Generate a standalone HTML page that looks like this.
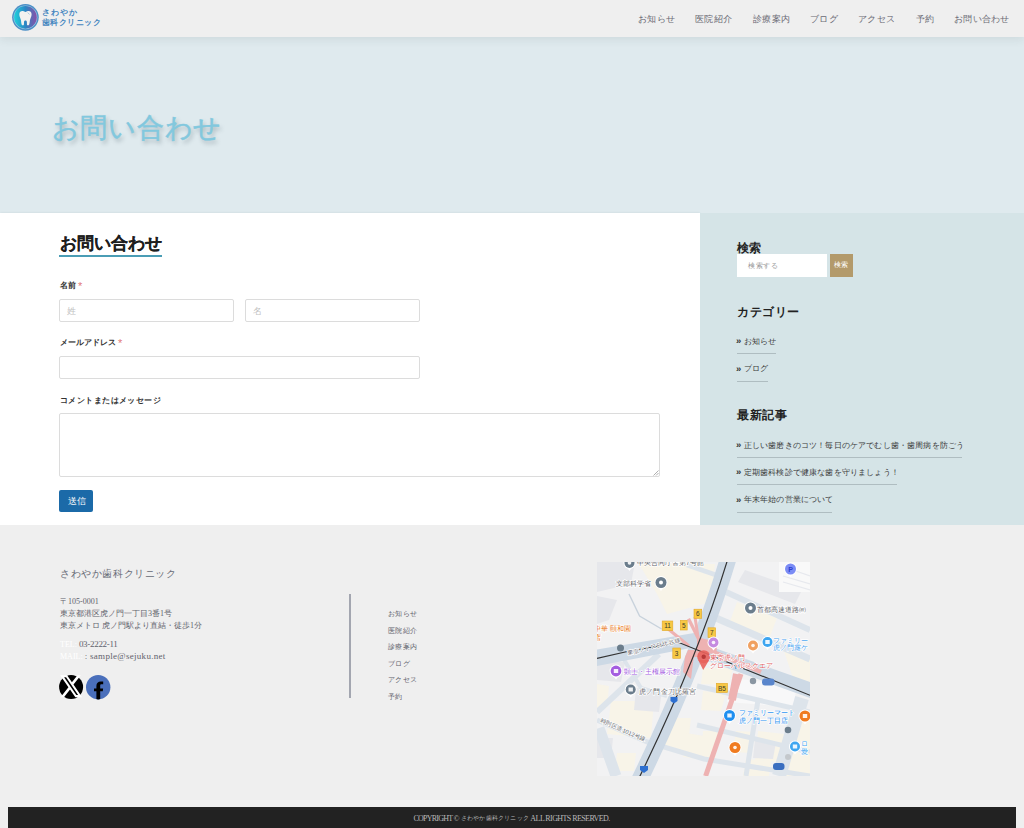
<!DOCTYPE html>
<html lang="ja">
<head>
<meta charset="utf-8">
<title>お問い合わせ</title>
<style>
*{box-sizing:border-box;margin:0;padding:0}
html,body{width:1024px;height:828px;overflow:hidden;background:#efefef}
body{position:relative;font-family:"Liberation Serif",serif;color:#333}
.abs{position:absolute;white-space:nowrap;line-height:1}
#header{position:absolute;left:0;top:0;width:1024px;height:37px;background:#efefef;z-index:2;box-shadow:0 2px 9px rgba(40,60,60,0.10)}
#hero{position:absolute;left:0;top:37px;width:1024px;height:176px;background:#dfeaee}
#main{position:absolute;left:0;top:213px;width:700px;height:312px;background:#fff;box-shadow:0 0 2px rgba(40,90,90,0.12)}
#side{position:absolute;left:700px;top:213px;width:324px;height:312px;background:#d5e4e7}
#footer{position:absolute;left:0;top:525px;width:1024px;height:303px;background:#efefef}
#bar{position:absolute;left:8px;top:807px;width:1008px;height:21px;background:#222}
.nav{font-size:9px;letter-spacing:0.25px;color:#6a6a74;top:15px}
.lbl{font-size:8px;font-weight:bold;color:#333}
.req{color:#e27a7a;font-weight:normal;font-family:"Liberation Sans",sans-serif;font-size:11px;position:relative;top:1.5px;line-height:0}
.inp{position:absolute;background:#fff;border:1px solid #dcdcdc;border-radius:2px}
.ph{position:absolute;font-size:9px;color:#c2c2c2;line-height:1}
.wt{font-size:12px;font-weight:bold;color:#222}
.li{font-size:8px;color:#3a3a3a;letter-spacing:0.17px}
.ar{display:inline-block;width:7.7px;font-family:"Liberation Sans",sans-serif;font-weight:bold;font-size:9.5px;color:#333;letter-spacing:0;position:relative;top:0.8px}
.ul{position:absolute;height:1px;background:#afbdc1}
.fn{font-size:7px;letter-spacing:0.4px;color:#5f626c}
.ad{font-size:8px;color:#5f626c}
</style>
</head>
<body>
<div id="header">
  <svg class="abs" style="left:12px;top:4px" width="27" height="27" viewBox="0 0 27 27">
    <defs><linearGradient id="lg" x1="0" y1="0" x2="1" y2="0"><stop offset="0" stop-color="#1fd0dc"/><stop offset="0.5" stop-color="#2a86c4"/><stop offset="1" stop-color="#8a4fa8"/></linearGradient></defs>
    <circle cx="13.45" cy="13.35" r="13.3" fill="#4b8fc6"/>
    <circle cx="13.45" cy="13.35" r="11.9" fill="#9cc8e4"/>
    <circle cx="13.45" cy="13.35" r="11.3" fill="url(#lg)"/>
    <path d="M7.3 10.2 C7.3 7.6 9.3 6.8 11 7.1 C12 7.3 12.8 7.8 13.45 8.1 C14.1 7.8 14.9 7.3 15.9 7.1 C17.6 6.8 19.6 7.6 19.6 10.2 C19.6 12.6 18.4 14.2 18 16 C17.6 18 17.6 21 16.6 21.2 L15.4 21.2 C14.9 21.2 14.9 19.5 14.9 18 C14.9 17 14.3 16.4 13.45 16.4 C12.6 16.4 12 17 12 18 C12 19.5 12 21.2 11.5 21.2 L10.3 21.2 C9.3 21 9.3 18 8.9 16 C8.5 14.2 7.3 12.6 7.3 10.2 Z" fill="#f2f2f0"/>
    <path d="M15.6 8.6 L17.6 10.4" stroke="#8fb6d6" stroke-width="0.7"/>
  </svg>
  <div class="abs" style="left:41.5px;top:9.2px;font-family:'Liberation Sans',sans-serif;font-size:8px;font-weight:bold;color:#4586bf;letter-spacing:1.2px">さわやか</div>
  <div class="abs" style="left:41.5px;top:19.3px;font-family:'Liberation Sans',sans-serif;font-size:8px;font-weight:bold;color:#4586bf;letter-spacing:0.6px">歯科クリニック</div>
  <div class="abs nav" style="left:638px">お知らせ</div>
  <div class="abs nav" style="left:695px">医院紹介</div>
  <div class="abs nav" style="left:753px">診療案内</div>
  <div class="abs nav" style="left:810px">ブログ</div>
  <div class="abs nav" style="left:858px">アクセス</div>
  <div class="abs nav" style="left:916px">予約</div>
  <div class="abs nav" style="left:954px">お問い合わせ</div>
</div>

<div id="hero">
  <div class="abs" style="left:51.5px;top:77.7px;font-size:27px;letter-spacing:0.8px;color:#82c8de;-webkit-text-stroke:0.5px #82c8de;text-shadow:2px 2.5px 4px rgba(70,90,100,0.4)">お問い合わせ</div>
</div>

<div id="main">
  <div class="abs" style="left:60px;top:22px;font-size:17px;font-weight:bold;color:#1e1e1e;-webkit-text-stroke:0.12px #1e1e1e">お問い合わせ</div>
  <div class="abs" style="left:59px;top:42px;width:103px;height:2px;background:#4a9db5"></div>

  <div class="abs lbl" style="left:60px;top:69.4px">名前 <span class="req">*</span></div>
  <div class="inp" style="left:59px;top:86px;width:175px;height:23px"></div>
  <div class="ph" style="left:67px;top:94px">姓</div>
  <div class="inp" style="left:245px;top:86px;width:175px;height:23px"></div>
  <div class="ph" style="left:253px;top:94px">名</div>

  <div class="abs lbl" style="left:60px;top:126.4px">メールアドレス <span class="req">*</span></div>
  <div class="inp" style="left:59px;top:143px;width:361px;height:23px"></div>

  <div class="abs lbl" style="left:60px;top:184px;font-size:8px;letter-spacing:0.43px">コメントまたはメッセージ</div>
  <div class="inp" style="left:59px;top:200px;width:601px;height:64px"></div>
  <svg class="abs" style="left:652px;top:256px" width="7" height="7" viewBox="0 0 7 7"><path d="M6.5 1.5 L1.5 6.5 M6.5 4 L4 6.5" stroke="#9a9a9a" stroke-width="0.8"/></svg>

  <div class="abs" style="left:59px;top:277px;width:34px;height:22px;background:#1b6aa8;border-radius:2px"></div>
  <div class="abs" style="left:67.5px;top:284px;font-size:8.5px;color:#fff">送信</div>
</div>

<div id="side">
  <div class="abs wt" style="left:37px;top:29px">検索</div>
  <div class="abs" style="left:37px;top:41px;width:90px;height:23px;background:#fff"></div>
  <div class="abs" style="left:48px;top:49.5px;font-size:7px;letter-spacing:0.6px;color:#999">検索する</div>
  <div class="abs" style="left:130px;top:41px;width:23px;height:23px;background:#b39a6b"></div>
  <div class="abs" style="left:134px;top:49px;font-size:6.5px;color:#fff">検索</div>

  <div class="abs wt" style="left:37px;top:93px;letter-spacing:0.5px">カテゴリー</div>
  <div class="abs li" style="left:36px;top:122.5px"><b class="ar">»</b>お知らせ</div>
  <div class="ul" style="left:37px;top:140px;width:39px"></div>
  <div class="abs li" style="left:36px;top:150px"><b class="ar">»</b>ブログ</div>
  <div class="ul" style="left:37px;top:168px;width:31px"></div>

  <div class="abs wt" style="left:37px;top:196px;letter-spacing:0.6px">最新記事</div>
  <div class="abs li" style="left:36px;top:226.5px"><b class="ar">»</b>正しい歯磨きのコツ！毎日のケアでむし歯・歯周病を防ごう</div>
  <div class="ul" style="left:37px;top:244px;width:225px"></div>
  <div class="abs li" style="left:36px;top:253.5px"><b class="ar">»</b>定期歯科検診で健康な歯を守りましょう！</div>
  <div class="ul" style="left:37px;top:271px;width:160px"></div>
  <div class="abs li" style="left:36px;top:281px"><b class="ar">»</b>年末年始の営業について</div>
  <div class="ul" style="left:37px;top:299px;width:95px"></div>
</div>

<div id="footer">
  <div class="abs" style="left:60px;top:43.5px;font-size:10px;letter-spacing:0.6px;color:#666a75">さわやか歯科クリニック</div>
  <div class="abs ad" style="left:60px;top:72.5px">〒105-0001</div>
  <div class="abs ad" style="left:60px;top:85px">東京都港区虎ノ門一丁目3番1号</div>
  <div class="abs ad" style="left:60px;top:96.5px">東京メトロ 虎ノ門駅より直結・徒歩1分</div>
  <div class="abs ad" style="left:60px;top:115.3px"><span style="color:#fff">TEL:</span> <span style="font-size:9px;letter-spacing:-0.3px">03-2222-11</span></div>
  <div class="abs ad" style="left:60px;top:127px"><span style="color:#fff">MAIL:</span> <span style="font-size:9px;letter-spacing:0.3px">: sample@sejuku.net</span></div>
  <svg class="abs" style="left:58px;top:149px" width="27" height="27" viewBox="-1 -1 27 27">
    <circle cx="12.1" cy="12" r="12" fill="#000"/>
    <g transform="translate(12.1,11.2) scale(1.02,1.13) translate(-12,-12)"><path d="M18.244 2.25h3.308l-7.227 8.26 8.502 11.24H16.17l-5.214-6.817L4.99 21.75H1.68l7.73-8.835L1.254 2.25H8.08l4.713 6.231zm-1.161 17.52h1.833L7.084 4.126H5.117z" fill="#fff"/></g>
  </svg>
  <svg class="abs" style="left:86px;top:149.7px" width="24.5" height="25" viewBox="0 0 24.5 25">
    <defs><clipPath id="fbc"><circle cx="12.2" cy="12.2" r="12.2"/></clipPath></defs>
    <circle cx="12.2" cy="12.2" r="12.2" fill="#4a6fbb"/>
    <path clip-path="url(#fbc)" d="M10.4 26 V16.3 H8 V13.6 H10.4 V11 C10.4 8 12.1 6.5 14.8 6.5 H17.2 V9.2 H15.5 C14.6 9.2 14.2 9.7 14.2 10.5 V13.6 H17.1 L16.8 16.3 H14.2 V26 Z" fill="#000"/>
  </svg>
  <div class="abs" style="left:349px;top:69px;width:1.5px;height:104px;background:#a3a6b0"></div>
  <div class="abs fn" style="left:388px;top:86px">お知らせ</div>
  <div class="abs fn" style="left:388px;top:102.5px">医院紹介</div>
  <div class="abs fn" style="left:388px;top:119px">診療案内</div>
  <div class="abs fn" style="left:388px;top:135.5px">ブログ</div>
  <div class="abs fn" style="left:388px;top:152px">アクセス</div>
  <div class="abs fn" style="left:388px;top:168.5px">予約</div>

  <div id="map" class="abs" style="left:597px;top:37px;width:213px;height:214px;overflow:hidden"><svg width="213" height="214" viewBox="0 0 213 214" style="display:block">
<rect width="213" height="214" fill="#f2f2f3"/>
<g fill="#f8f4e8">
<polygon points="42,2 118,2 114,40 70,52 60,32"/>
<polygon points="140,40 180,56 172,77 132,62"/>
<polygon points="14,139 57,139 54,176 10,172"/>
<polygon points="63,156 94,156 90,190 60,187"/>
<polygon points="89,171 107,174 104,197 86,195"/>
<polygon points="20,191 39,191 37,209 18,209"/>
<polygon points="106,106 136,106 132,123 104,122"/>
<polygon points="106,129 129,131 124,149 104,148"/>
<polygon points="106,169 123,169 118,197 104,197"/>
<polygon points="139,169 158,170 154,191 136,190"/>
<polygon points="161,169 187,172 183,200 158,198"/>
<polygon points="195,158 213,158 213,214 186,214"/>
<polygon points="149,197 174,199 172,214 146,214"/>
<polygon points="106,10 114,10 112,39 104,38"/>
<polygon points="186,86 213,96 213,122 196,116"/>
<polygon points="0,122 12,124 10,146 0,146"/>
</g>
<g fill="#e6e7eb">
<polygon points="0,0 38,0 34,22 0,30"/>
<polygon points="0,34 20,38 12,58 0,62"/>
<polygon points="148,8 205,28 198,42 141,20"/>
<polygon points="39,126 65,128 62,150 37,148"/>
<polygon points="0,100 28,100 24,120 0,118"/>
<polygon points="158,178 179,180 176,197 156,196"/>
<polygon points="0,176 16,176 14,196 0,196"/>
</g>
<polygon points="134.7,116 200,124 196,145 130,140" fill="#f8f8f9"/>
<rect x="182" y="0" width="31" height="30" fill="#f9f9f9"/>
<g stroke="#e7e9ee" stroke-width="1.2"><path d="M186,14 L213,22 M186,20 L213,28 M190,6 L213,14"/></g>
<g stroke="#dde4eb" fill="none">
<path d="M90,3 L122,14" stroke-width="5"/>
<path d="M129,30 L213,68" stroke-width="6"/>
<path d="M119,56 L213,97" stroke-width="7"/>
<path d="M100,124 L213,150" stroke-width="5"/>
<path d="M100,163 L213,190" stroke-width="5"/>
<path d="M161,138 L149,214" stroke-width="5"/>
<path d="M205,136 L182,214" stroke-width="14"/>
<path d="M0,150 L62,92" stroke-width="6"/>
<path d="M0,158 L50,180 L107,197 L213,214" stroke-width="5"/>
<path d="M2,166 L19,214" stroke-width="11"/>
<path d="M26,96 L44,126 L70,134" stroke-width="4"/>
</g>
<path d="M32,32 L42.6,54 L64.6,67" stroke="#c8d2dc" stroke-width="1.4" fill="none"/>
<g fill="#cdd9e5">
</g><path d="M131.4,-4 Q102,95 42.5,218" stroke="#cdd9e5" stroke-width="16.5" fill="none"/><g fill="#cdd9e5">
<polygon points="0,87.4 98.5,70.8 100,84.7 0,104"/>
<polygon points="112,84 213,120 213,136 108,98"/>
</g>
<g fill="#eeb2b2" stroke="none">
<polygon points="100,75 119.7,80 119.7,91.5 100,91.5"/>
<polygon points="91,88 97.6,88 94,117 86,110 88,95"/>
</g>
<g stroke="#eeb2b2" fill="none">
<path d="M114,89 L164,110" stroke-width="4.3"/>
<path d="M91.5,56.7 L103.4,80.6" stroke-width="3.3"/>
<path d="M98,55 L101,75" stroke-width="3"/>
<path d="M70,66 L92,84" stroke-width="3"/>
<path d="M140,112 L135,138" stroke-width="8"/>
<path d="M144,112 L108.6,214" stroke-width="5"/>
<path d="M92,92 L108,92" stroke-width="6"/>
</g>
<g stroke="#333" fill="none" stroke-width="1.2">
<path d="M130.5,-2 Q101,95 42,216"/>
<polyline points="0,96.3 30.3,89.5 81.9,80.5 213,133.3"/>
</g>
<circle cx="106.7" cy="94.7" r="6.5" fill="#e8625c" opacity="0.9"/>
<polygon points="101.2,98 112.2,98 106.2,108" fill="#e8625c" opacity="0.9"/>
<circle cx="106.7" cy="94.7" r="2.2" fill="#b83a3a"/>
<g fill="#f7c844" stroke="#e2a72a" stroke-width="0.6">
<rect x="65.2" y="59" width="10.6" height="9.6"/>
<rect x="83.3" y="58.3" width="6.9" height="9.7"/>
<rect x="97" y="47.2" width="7.7" height="9.1"/>
<rect x="111" y="65.8" width="7.6" height="9.7"/>
<rect x="75.8" y="86" width="7.5" height="10.3"/>
<rect x="119.4" y="121.3" width="11.1" height="9.2"/>
</g>
<g font-family="Liberation Sans, sans-serif" font-size="6.5" fill="#3a3a2a" text-anchor="middle">
<text x="70.5" y="66.2">11</text><text x="86.7" y="65.5">5</text><text x="100.8" y="54.2">6</text>
<text x="114.8" y="73">7</text><text x="79.5" y="93.7">3</text><text x="125" y="128.6">B5</text>
</g>
<g>
<circle cx="64" cy="20.5" r="6.5" fill="#fff"/><polygon points="61,25.0 67,25.0 64,29.0" fill="#fff"/>
<circle cx="64" cy="20.5" r="5.5" fill="#6b7d8c"/>
<circle cx="64" cy="20.5" r="2" fill="#fff"/>
<circle cx="153.5" cy="46" r="6.5" fill="#fff"/><polygon points="150.5,50.5 156.5,50.5 153.5,54.5" fill="#fff"/>
<circle cx="153.5" cy="46" r="5.5" fill="#6b7d8c"/>
<circle cx="153.5" cy="46" r="2" fill="#fff"/>
<circle cx="32.5" cy="1" r="6" fill="#fff"/><polygon points="29.5,5 35.5,5 32.5,9" fill="#fff"/>
<circle cx="32.5" cy="1" r="5" fill="#6b7d8c"/>
<circle cx="32.5" cy="1" r="1.8" fill="#fff" opacity="0.9"/>
<circle cx="193.5" cy="7" r="6.5" fill="#fff"/><polygon points="190.5,11.5 196.5,11.5 193.5,15.5" fill="#fff"/>
<circle cx="193.5" cy="7" r="5.5" fill="#7b8cf5"/>
<text x="193.5" y="9.5" font-family="Liberation Sans, sans-serif" font-size="7" font-weight="bold" fill="#2b3fd0" text-anchor="middle">P</text>
<circle cx="116.5" cy="80.5" r="6" fill="#fff"/><polygon points="113.5,84.5 119.5,84.5 116.5,88.5" fill="#fff"/>
<circle cx="116.5" cy="80.5" r="5" fill="#c58be0"/>
<circle cx="116.5" cy="80.5" r="1.8" fill="#fff" opacity="0.9"/>
<circle cx="156" cy="83.5" r="6" fill="#fff"/><polygon points="153,87.5 159,87.5 156,91.5" fill="#fff"/>
<circle cx="156" cy="83.5" r="5" fill="#f0a060"/>
<circle cx="156" cy="83.5" r="1.8" fill="#fff" opacity="0.9"/>
<circle cx="170.5" cy="80" r="6" fill="#fff"/><polygon points="167.5,84 173.5,84 170.5,88" fill="#fff"/>
<circle cx="170.5" cy="80" r="5" fill="#3ea6f0"/>
<rect x="168.3" y="78" width="4.4" height="4" fill="#fff" opacity="0.9"/>
<circle cx="19" cy="109" r="6.4" fill="#fff"/><polygon points="16,113.4 22,113.4 19,117.4" fill="#fff"/>
<circle cx="19" cy="109" r="5.4" fill="#a45de0"/>
<rect x="16.8" y="107" width="4.4" height="4" fill="#fff" opacity="0.9"/>
<circle cx="33.7" cy="127.5" r="6" fill="#fff"/><polygon points="30.700000000000003,131.5 36.7,131.5 33.7,135.5" fill="#fff"/>
<circle cx="33.7" cy="127.5" r="5" fill="#6b7d8c"/>
<rect x="31.500000000000004" y="125.5" width="4.4" height="4" fill="#fff" opacity="0.9"/>
<circle cx="132.5" cy="153.5" r="6.5" fill="#fff"/><polygon points="129.5,158.0 135.5,158.0 132.5,162.0" fill="#fff"/>
<circle cx="132.5" cy="153.5" r="5.5" fill="#1f8ff0"/>
<rect x="130.3" y="151.5" width="4.4" height="4" fill="#fff" opacity="0.9"/>
<circle cx="208" cy="154" r="6.5" fill="#fff"/><polygon points="205,158.5 211,158.5 208,162.5" fill="#fff"/>
<circle cx="208" cy="154" r="5.5" fill="#f07b20"/>
<rect x="205.8" y="152" width="4.4" height="4" fill="#fff" opacity="0.9"/>
<circle cx="138" cy="185.5" r="6.5" fill="#fff"/><polygon points="135,190.0 141,190.0 138,194.0" fill="#fff"/>
<circle cx="138" cy="185.5" r="5.5" fill="#f07b20"/>
<circle cx="138" cy="185.5" r="1.8" fill="#fff" opacity="0.9"/>
<circle cx="198" cy="184.5" r="6" fill="#fff"/><polygon points="195,188.5 201,188.5 198,192.5" fill="#fff"/>
<circle cx="198" cy="184.5" r="5" fill="#3ea6f0"/>
<rect x="195.8" y="182.5" width="4.4" height="4" fill="#fff" opacity="0.9"/>
<circle cx="23.5" cy="86" r="3.5" fill="#6b7d8c"/>
<circle cx="191" cy="168" r="3.3" fill="#6b7d8c"/>
<circle cx="191" cy="195" r="3" fill="#c4c8cc"/>
<circle cx="156" cy="119" r="3.2" fill="#8a96a2"/>
<path d="M73.5,135 h7 v4 l-3.5,2.5 l-3.5,-2.5z" fill="#2d6fd0"/>
<path d="M43,204 h8 v4 l-4,3 l-4,-3z" fill="#2d6fd0"/>
<rect x="165" y="116.5" width="12.5" height="7" rx="3" fill="#5a86cc"/>
<rect x="176" y="201" width="11.5" height="7" rx="3" fill="#3a6ec0"/>
<rect x="138" y="101" width="8" height="6" fill="#7fa8d0"/>
</g>
<g font-family="Liberation Sans, sans-serif" font-size="6.8" stroke="#fff" stroke-width="1.4" paint-order="stroke">
<text x="19" y="23.5" fill="#5f6368">文部科学省</text>
<text x="40" y="2.5" fill="#5f6368">中央合同庁舎第7号館</text>
<text x="160" y="49.5" fill="#5f6368">首都高速道路㈱</text>
<text x="-3" y="69" fill="#e8710a">中華 頤和園</text>
<text x="-3" y="77.5" fill="#e8710a">店</text>
<text x="113" y="98" fill="#e06060">東京虎ノ門</text>
<text x="113" y="105.5" fill="#e06060">グローバルスクエア</text>
<text x="27.3" y="112.3" fill="#a45de0" font-size="7.4">顕士・主権展示館</text>
<text x="41.5" y="132" fill="#5f6368">虎ノ門 金刀比羅宮</text>
<text x="141.5" y="153" fill="#1f8ff0">ファミリーマート</text>
<text x="141.5" y="161" fill="#1f8ff0">虎ノ門一丁目店</text>
<text x="176" y="81" fill="#4aa3f0">ファミリー</text>
<text x="176" y="88" fill="#4aa3f0">虎ノ門露ケ</text>
<text x="204" y="184" fill="#3ea6f0">ロ</text>
<text x="204" y="192" fill="#3ea6f0">愛</text>
</g>
<g font-family="Liberation Sans, sans-serif" font-size="5.8" fill="#5f6368" stroke="#fff" stroke-width="1.2" paint-order="stroke">
<text transform="translate(31,93) rotate(-14)">東京メトロ日比谷線</text>
<text transform="translate(3,160) rotate(24)">時則区道1012号線</text>
</g>
</svg>
</div>
</div>

<div id="bar">
  <div class="abs" style="left:405.5px;top:7.8px;font-size:8px;letter-spacing:-0.77px;color:#b8b8b8">COPYRIGHT ©<span style="font-size:6px;letter-spacing:0.2px;margin-left:2px;position:relative;top:-0.5px">さわやか歯科クリニック</span><span style="letter-spacing:-0.58px"> ALL RIGHTS RESERVED.</span></div>
</div>
</body>
</html>
